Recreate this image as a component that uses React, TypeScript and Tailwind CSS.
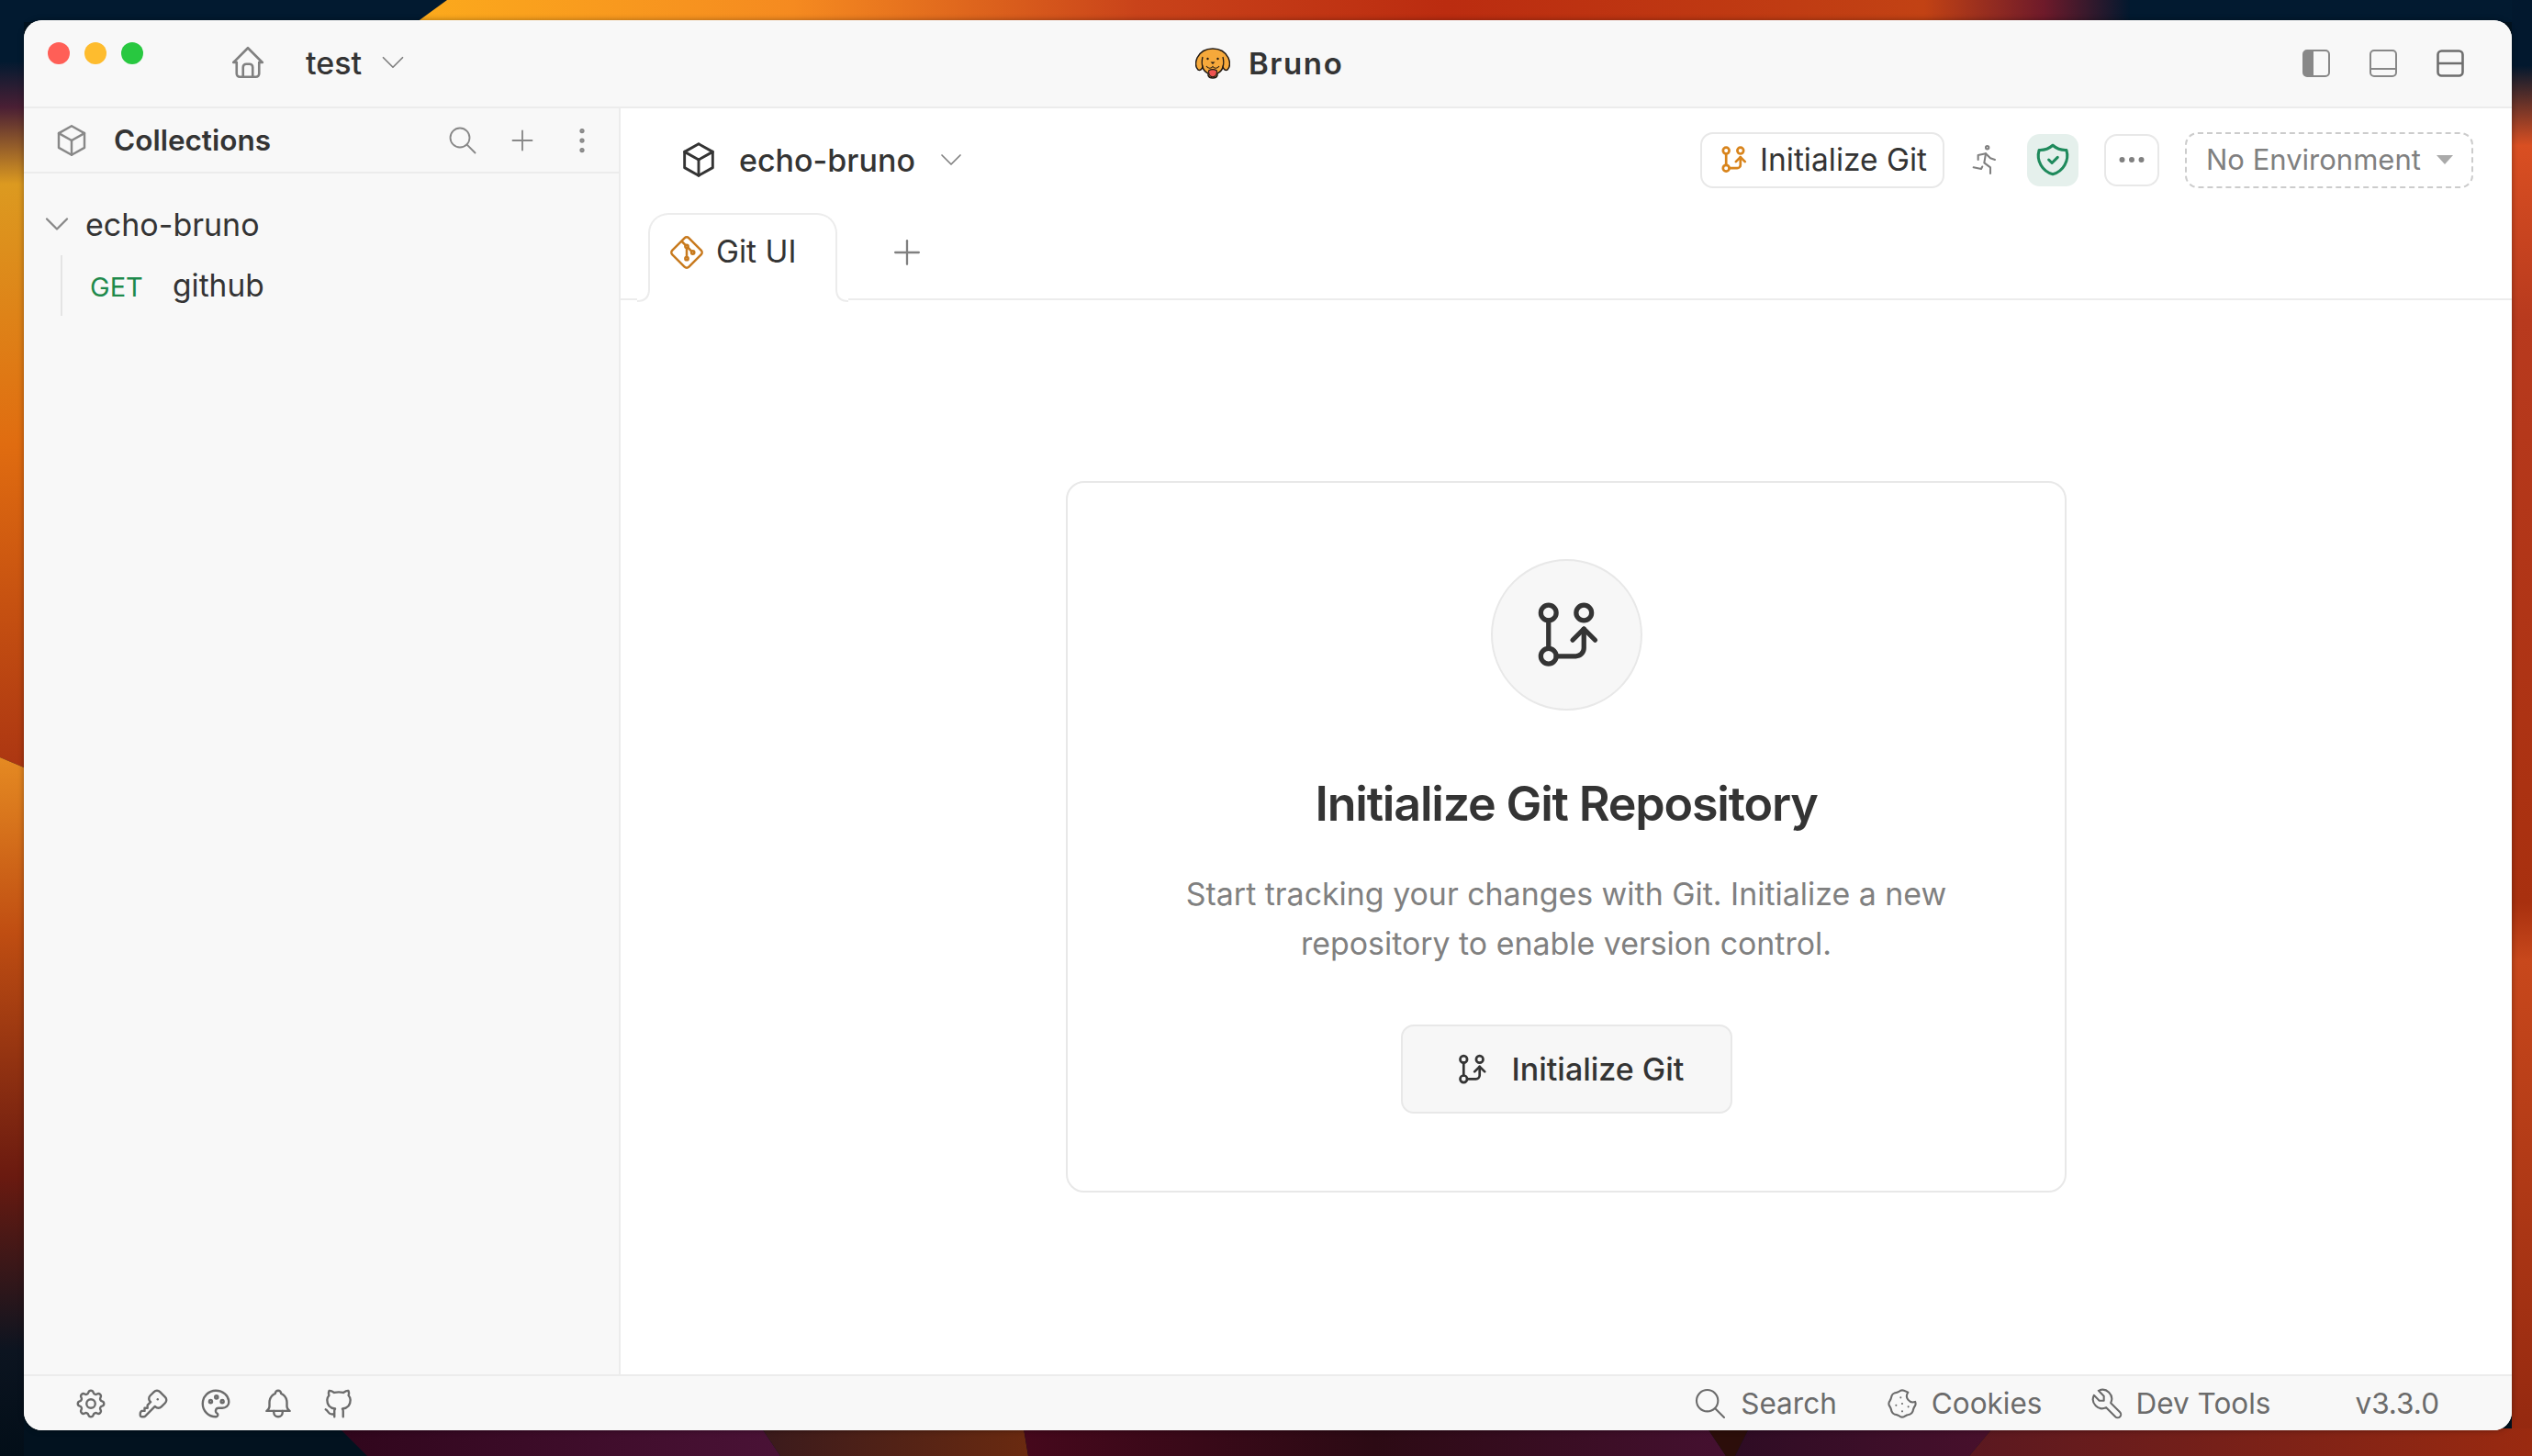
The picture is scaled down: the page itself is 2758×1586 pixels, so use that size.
import {
  TbBell,
  TbBox,
  TbBrandGit,
  TbBrandGithub,
  TbChevronDown,
  TbCookie,
  TbDots,
  TbDotsVertical,
  TbHome,
  TbKey,
  TbPalette,
  TbPlus,
  TbRun,
  TbSearch,
  TbSettings,
  TbTool,
} from 'react-icons/tb'

function Wallpaper() {
  return (
    <svg className="absolute inset-0 h-full w-full" viewBox="0 0 2758 1586" preserveAspectRatio="none">
      <defs>
        <linearGradient id="top" x1="0" x2="1" y1="0" y2="0">
          <stop offset="0" stopColor="#fcaa1c" />
          <stop offset="0.22" stopColor="#f58a20" />
          <stop offset="0.42" stopColor="#c9431a" />
          <stop offset="0.6" stopColor="#bb2c10" />
          <stop offset="0.88" stopColor="#c24214" />
          <stop offset="0.95" stopColor="#6e1a2a" />
          <stop offset="1" stopColor="#02182e" />
        </linearGradient>
        <linearGradient id="leftA" x1="0" x2="0" y1="0" y2="1">
          <stop offset="0" stopColor="#021a30" />
          <stop offset="0.08" stopColor="#021a30" />
          <stop offset="0.14" stopColor="#4a1f34" />
          <stop offset="0.24" stopColor="#dc9a20" />
          <stop offset="0.58" stopColor="#e06c10" />
          <stop offset="1" stopColor="#ac3612" />
        </linearGradient>
        <linearGradient id="leftB" x1="0" x2="0" y1="0" y2="1">
          <stop offset="0" stopColor="#e58a22" />
          <stop offset="0.25" stopColor="#c04e12" />
          <stop offset="0.6" stopColor="#6a1a10" />
          <stop offset="0.85" stopColor="#0c1420" />
          <stop offset="1" stopColor="#020e18" />
        </linearGradient>
        <linearGradient id="right" x1="0" x2="0" y1="0" y2="1">
          <stop offset="0" stopColor="#02182e" />
          <stop offset="0.045" stopColor="#02182e" />
          <stop offset="0.1" stopColor="#d94f22" />
          <stop offset="0.22" stopColor="#b83a1e" />
          <stop offset="0.62" stopColor="#a8300f" />
          <stop offset="0.66" stopColor="#c8481c" />
          <stop offset="1" stopColor="#92270f" />
        </linearGradient>
        <linearGradient id="bottomA" x1="0" x2="1" y1="0" y2="0">
          <stop offset="0" stopColor="#30061c" />
          <stop offset="1" stopColor="#4a1236" />
        </linearGradient>
        <linearGradient id="bottomB" x1="0" x2="1" y1="0" y2="0">
          <stop offset="0" stopColor="#3a1a1c" />
          <stop offset="1" stopColor="#6a2a10" />
        </linearGradient>
        <linearGradient id="bottomC" x1="0" x2="1" y1="0" y2="0">
          <stop offset="0" stopColor="#45081c" />
          <stop offset="0.5" stopColor="#2c0a14" />
          <stop offset="1" stopColor="#451030" />
        </linearGradient>
        <linearGradient id="bottomD" x1="0" x2="1" y1="0" y2="0">
          <stop offset="0" stopColor="#2e0c24" />
          <stop offset="1" stopColor="#48102c" />
        </linearGradient>
        <linearGradient id="bottomE" x1="0" x2="1" y1="0" y2="0">
          <stop offset="0" stopColor="#5a1820" />
          <stop offset="1" stopColor="#9a2a10" />
        </linearGradient>
      </defs>
      <rect width="2758" height="1586" fill="#02121f" />
      <rect x="0" y="0" width="2758" height="24" fill="#021a30" />
      <polygon points="487,0 2320,0 2320,24 454,24" fill="url(#top)" />
      <polygon points="0,0 26,0 26,836 0,825" fill="url(#leftA)" />
      <polygon points="0,825 26,836 26,1586 0,1586" fill="url(#leftB)" />
      <rect x="2736" y="0" width="22" height="1586" fill="url(#right)" />
      <polygon points="370,1556 830,1556 850,1586 400,1586" fill="url(#bottomA)" />
      <polygon points="830,1556 1115,1556 1120,1586 850,1586" fill="url(#bottomB)" />
      <polygon points="1115,1556 1860,1556 1880,1586 1120,1586" fill="url(#bottomC)" />
      <polygon points="1860,1556 1905,1556 1890,1586 1880,1586" fill="#2c0e0a" />
      <polygon points="1905,1556 2170,1556 2145,1586 1890,1586" fill="url(#bottomD)" />
      <polygon points="2170,1556 2758,1556 2758,1586 2145,1586" fill="url(#bottomE)" />
    </svg>
  )
}

function GitInitIcon({ className, stroke = 1.5 }: { className?: string; stroke?: number }) {
  return (
    <svg className={className} viewBox="0 0 24 24" fill="none" stroke="currentColor" strokeWidth={stroke} strokeLinecap="round" strokeLinejoin="round">
      <circle cx="6.5" cy="5" r="2.4" />
      <circle cx="17.5" cy="5" r="2.4" />
      <circle cx="6.5" cy="18.5" r="2.4" />
      <path d="M6.5 7.4v8.7" />
      <path d="M8.9 18.5h6.1a2.5 2.5 0 0 0 2.5 -2.5v-6" />
      <path d="M14 13.5l3.5 -3.5l3.5 3.5" />
    </svg>
  )
}

function ShieldIcon({ className }: { className?: string }) {
  return (
    <svg className={className} viewBox="0 0 24 24" fill="none" stroke="currentColor" strokeWidth="1.75" strokeLinecap="round" strokeLinejoin="round">
      <path d="M12 3a12 12 0 0 0 8.5 3a12 12 0 0 1 -8.5 15a12 12 0 0 1 -8.5 -15a12 12 0 0 0 8.5 -3" />
      <path d="M9.5 12l2 2l3.5 -3.5" />
    </svg>
  )
}

function BrunoLogo() {
  return (
    <svg className="h-[34px] w-[38px]" viewBox="0 0 38 34">
      <path
        d="M19 1C27 1 33 5 36 11C38 16 38 21 35 24C33 25 31 24 30 21C29 25 26 27 24 28L24 30C23 34 15 34 14 30L14 28C12 27 9 25 8 21C7 24 5 25 3 24C0 21 0 16 2 11C5 5 11 1 19 1Z"
        fill="#f6a93b"
        stroke="#221a14"
        strokeWidth="1.5"
      />
      <path d="M8 10C7 14 7 18 8 21M30 10C31 14 31 18 30 21" fill="none" stroke="#221a14" strokeWidth="1.3" />
      <path d="M14.5 25C14.5 34 23.5 34 23.5 25C21 23.5 17 23.5 14.5 25Z" fill="#ef5350" stroke="#221a14" strokeWidth="1.1" />
      <path d="M16.5 15.5h5l-2.5 2.5z" fill="#221a14" />
      <path d="M12 20C14 23 17 23 19 20.5C21 23 24 23 26 20" fill="none" stroke="#221a14" strokeWidth="1.1" />
      <circle cx="13.5" cy="12" r="1.2" fill="#221a14" />
      <circle cx="24.5" cy="12" r="1.2" fill="#221a14" />
    </svg>
  )
}

function TitleBar() {
  return (
    <header className="relative flex h-[96px] shrink-0 items-center border-b-2 border-[#ececec] bg-[#f8f8f8] pb-[2px]">
      <div className="ml-[26px] flex -translate-y-[10px] gap-[16px]">
        <span className="size-[24px] rounded-full bg-[#ff5f57]" />
        <span className="size-[24px] rounded-full bg-[#febc2e]" />
        <span className="size-[24px] rounded-full bg-[#28c840]" />
      </div>
      <TbHome className="ml-[93px] size-[42px] text-[#808080]" strokeWidth={1.5} />
      <span className="ml-[42px] text-[34px] font-medium text-[#343434]">test</span>
      <TbChevronDown className="ml-[13px] size-[42px] text-[#808080]" strokeWidth={1} />
      <div className="absolute left-[1276px] top-[29px] flex items-center gap-[20px]">
        <BrunoLogo />
        <span className="text-[33px] font-semibold leading-[36px] tracking-[1.6px] text-[#343434]">Bruno</span>
      </div>
      <div className="ml-auto mr-[52px] mt-[2px] flex items-center gap-[43px] text-[#888888]">
        <svg className="size-[30px]" viewBox="0 0 30 30">
          <rect x="1" y="1" width="28" height="28" rx="4" fill="none" stroke="currentColor" strokeWidth="2" />
          <path d="M5 1h7v28h-7a4 4 0 0 1 -4 -4v-20a4 4 0 0 1 4 -4z" fill="currentColor" />
        </svg>
        <svg className="size-[30px]" viewBox="0 0 30 30" fill="none" stroke="currentColor" strokeWidth="2">
          <rect x="1" y="1" width="28" height="28" rx="4" />
          <path d="M1 21h28" />
        </svg>
        <svg className="size-[30px] text-[#6e6e6e]" viewBox="0 0 30 30" fill="none" stroke="currentColor" strokeWidth="2.6">
          <rect x="1.5" y="1.5" width="27" height="27" rx="4" />
          <path d="M1 15h28" />
        </svg>
      </div>
    </header>
  )
}

function Sidebar() {
  return (
    <aside className="flex w-[650px] shrink-0 flex-col border-r-2 border-[#ececec] bg-[#f8f8f8]">
      <div className="flex h-[71px] shrink-0 items-center border-b-2 border-[#ececec] pl-[31px] pr-[22px]">
        <TbBox className="size-[42px] text-[#888888]" strokeWidth={1.4} />
        <span className="ml-[25px] text-[31.5px] font-semibold text-[#343434]">Collections</span>
        <div className="ml-auto flex items-center gap-[29px] text-[#888888]">
          <TbSearch className="size-[36px]" strokeWidth={1.25} />
          <TbPlus className="size-[36px]" strokeWidth={1.25} />
          <TbDotsVertical className="size-[36px]" strokeWidth={1.5} />
        </div>
      </div>
      <div className="pt-[21px]">
        <div className="flex h-[68px] items-center pl-[14px]">
          <TbChevronDown className="size-[44px] text-[#888888]" strokeWidth={1.25} />
          <span className="ml-[9px] text-[34px] text-[#343434]">echo-bruno</span>
        </div>
        <div className="ml-[40px] flex h-[66px] items-center border-l-2 border-[#e4e4e4] pl-[30px]">
          <span className="w-[90px] pt-[4px] text-[29px] text-[#1f8a4c]">GET</span>
          <span className="text-[33.5px] text-[#343434]">github</span>
        </div>
      </div>
    </aside>
  )
}

function TabFoot({ side }: { side: 'left' | 'right' }) {
  if (side === 'left') {
    return (
      <svg className="absolute -left-[14px] -bottom-[2px] size-[14px]" viewBox="0 0 14 14">
        <rect width="14" height="14" fill="#ffffff" />
        <path d="M0 13Q13 13 13 0" fill="none" stroke="#ececec" strokeWidth="2" />
      </svg>
    )
  }
  return (
    <svg className="absolute -right-[14px] -bottom-[2px] size-[14px]" viewBox="0 0 14 14">
      <rect width="14" height="14" fill="#ffffff" />
      <path d="M14 13Q1 13 1 0" fill="none" stroke="#ececec" strokeWidth="2" />
    </svg>
  )
}

function MainPane() {
  return (
    <main className="flex min-w-0 flex-1 flex-col bg-white">
      <div className="flex h-[112px] shrink-0 items-center pl-[62px] pr-[42px]">
        <TbBox className="size-[46px] text-[#343434]" strokeWidth={1.5} />
        <span className="ml-[21px] text-[34px] font-medium text-[#343434]">echo-bruno</span>
        <TbChevronDown className="ml-[19px] size-[40px] text-[#808080]" strokeWidth={1} />
        <div className="ml-auto flex items-center">
          <button className="flex h-[61px] w-[266px] items-center rounded-[14px] border-2 border-[#e8e8e8] pl-[17px]">
            <GitInitIcon className="size-[34px] text-[#d8841c]" stroke={1.9} />
            <span className="ml-[12px] text-[33.5px] text-[#343434]">Initialize Git</span>
          </button>
          <TbRun className="ml-[25px] size-[40px] text-[#808080]" strokeWidth={1.25} />
          <div className="ml-[25px] flex h-[57px] w-[56px] items-center justify-center rounded-[14px] bg-[#e5f0ec]">
            <ShieldIcon className="size-[42px] text-[#1f8a5c]" />
          </div>
          <button className="ml-[28px] flex h-[57px] w-[60px] items-center justify-center rounded-[14px] border-2 border-[#e8e8e8]">
            <TbDots className="size-[36px] text-[#808080]" strokeWidth={2} />
          </button>
          <button className="ml-[28px] flex h-[61px] w-[314px] items-center rounded-[14px] border-2 border-dashed border-[#cccccc] pl-[21px]">
            <span className="text-[31px] text-[#808080]">No Environment</span>
            <span className="ml-[17px] h-0 w-0 border-x-[9px] border-t-[10px] border-x-transparent border-t-[#aaaaaa]" />
          </button>
        </div>
      </div>
      <div className="flex h-[97px] shrink-0 items-end border-b-2 border-[#ececec] pl-[30px]">
        <div className="relative -mb-[2px] flex h-[95px] w-[206px] items-center rounded-t-[22px] border-2 border-b-0 border-[#ececec] bg-white pb-[12px] pl-[20px]">
          <TabFoot side="left" />
          <TabFoot side="right" />
          <TbBrandGit className="size-[40px] text-[#c87a1e]" strokeWidth={1.5} />
          <span className="ml-[12px] text-[33.5px] text-[#343434]">Git UI</span>
        </div>
        <TbPlus className="mb-[28px] ml-[54px] size-[44px] text-[#808080]" strokeWidth={1.25} />
      </div>
      <div className="flex flex-1 items-center justify-center pb-[1px]">
        <div className="flex h-[775px] w-[1090px] flex-col items-center rounded-[20px] border-2 border-[#e8e8e8] pt-[83px]">
          <div className="flex size-[165px] items-center justify-center rounded-full border-2 border-[#e8e8e8] bg-[#f7f7f7]">
            <GitInitIcon className="size-[84px] text-[#343434]" />
          </div>
          <h1 className="mt-[72px] text-[52px] font-semibold leading-[60px] tracking-[-1.2px] text-[#343434]">Initialize Git Repository</h1>
          <p className="mt-[41px] w-[900px] text-center text-[33.9px] leading-[54px] text-[#808080]">
            Start tracking your changes with Git. Initialize a new
            <br />
            repository to enable version control.
          </p>
          <button className="mt-[61px] flex h-[97px] w-[361px] items-center rounded-[14px] border-2 border-[#e8e8e8] bg-[#f7f7f7] pl-[56px]">
            <GitInitIcon className="size-[38px] text-[#343434]" stroke={1.7} />
            <span className="ml-[25px] text-[34px] font-medium text-[#343434]">Initialize Git</span>
          </button>
        </div>
      </div>
    </main>
  )
}

function StatusBar() {
  return (
    <footer className="flex h-[61px] shrink-0 items-center border-t-2 border-[#ececec] bg-[#f8f8f8] pl-[54px] pr-[79px] text-[#6b6b6b]">
      <div className="flex items-center gap-[30px]">
        <TbSettings className="size-[38px]" strokeWidth={1.5} />
        <TbKey className="size-[38px]" strokeWidth={1.5} />
        <TbPalette className="size-[38px]" strokeWidth={1.5} />
        <TbBell className="size-[38px]" strokeWidth={1.5} />
        <TbBrandGithub className="-ml-[2px] size-[38px]" strokeWidth={1.5} />
      </div>
      <div className="ml-auto flex items-center text-[31.5px]">
        <TbSearch className="size-[40px]" strokeWidth={1.25} />
        <span className="ml-[13px]">Search</span>
        <TbCookie className="ml-[51px] size-[40px]" strokeWidth={1.25} />
        <span className="ml-[12px]">Cookies</span>
        <TbTool className="ml-[51px] size-[40px]" strokeWidth={1.25} />
        <span className="ml-[11px]">Dev Tools</span>
        <span className="ml-[92px]">v3.3.0</span>
      </div>
    </footer>
  )
}

export default function App() {
  return (
    <div className="relative h-[1586px] w-[2758px] overflow-hidden bg-[#02121f] pl-[26px] pt-[22px] font-['Inter',sans-serif]">
      <Wallpaper />
      <div className="relative flex h-[1536px] w-[2710px] flex-col overflow-hidden rounded-[20px] bg-white shadow-[0_0_6px_rgba(0,0,0,0.35)]">
        <TitleBar />
        <div className="flex min-h-0 flex-1">
          <Sidebar />
          <MainPane />
        </div>
        <StatusBar />
      </div>
    </div>
  )
}
